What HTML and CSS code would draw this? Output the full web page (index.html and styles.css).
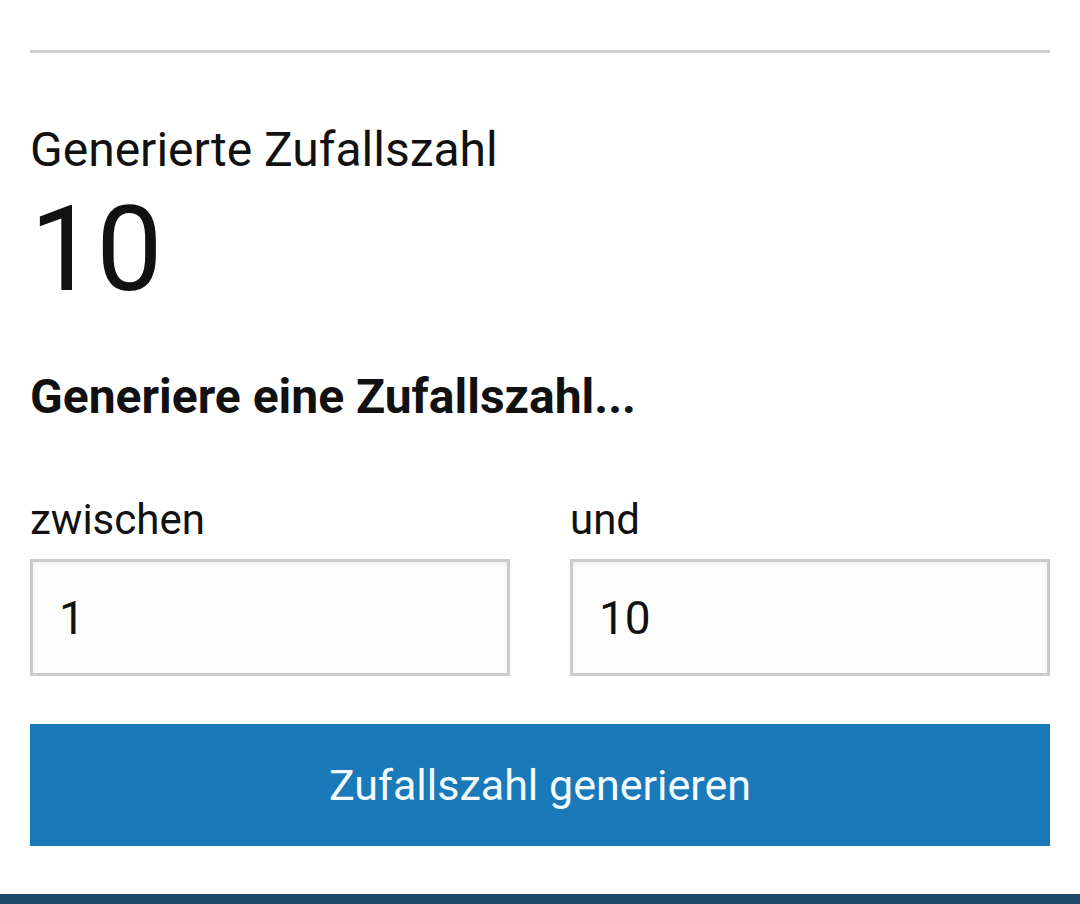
FILE: index.html
```html
<!DOCTYPE html>
<html lang="de">

<head>
  <meta charset="UTF-8" />
  <meta name="viewport" content="width=device-width, initial-scale=1.0" />
  <title>Zufallszahl</title>
  <link rel="stylesheet" href="styles.css">
</head>

<body>
  <div class="page">
    <div class="divider"></div>

    <div class="result">
      <p class="result-label">Generierte Zufallszahl</p>
      <p class="result-value" id="result">10</p>
    </div>

    <h2 class="form-title">Generiere eine Zufallszahl...</h2>

    <div class="range-fields">
      <div class="field">
        <label for="minValue">zwischen</label>
        <input type="text" id="minValue" value="1" />
      </div>
      <div class="field">
        <label for="maxValue">und</label>
        <input type="text" id="maxValue" value="10" />
      </div>
    </div>

    <button class="generate-button" onclick="generate()">Zufallszahl generieren</button>
  </div>

  <div class="footer-bar"></div>

  <script>
    function generate() {
      var min = parseInt(document.getElementById("minValue").value);
      var max = parseInt(document.getElementById("maxValue").value);

      if (isNaN(min) || isNaN(max) || max < min) {
        return;
      }

      var value = Math.floor(Math.random() * (max - min + 1)) + min;
      document.getElementById("result").innerText = value;
    }
  </script>
</body>

</html>
```

FILE: styles.css
```css
body {
  margin: 0;
  font-family: Roboto, "Noto Sans", Arial, sans-serif;
  background-color: #ffffff;
  color: #111111;
}

.page {
  padding: 50px 30px 48px;
}

.divider {
  height: 3px;
  background-color: #d0d0d0;
}

.result {
  margin-top: 69px;
}

.result-label {
  margin: 0;
  font-size: 48px;
  line-height: 56px;
}

.result-value {
  margin: 11px 0 0;
  font-size: 118px;
  line-height: 123px;
}

.form-title {
  margin: 57px 0 0;
  font-size: 48px;
  font-weight: bold;
  line-height: 56px;
}

.range-fields {
  display: grid;
  grid-template-columns: 1fr 1fr;
  gap: 60px;
  margin-top: 70px;
}

.field label {
  display: block;
  font-size: 42px;
  line-height: 50px;
  margin-bottom: 14px;
}

.field input {
  display: block;
  width: 100%;
  height: 117px;
  box-sizing: border-box;
  padding: 0 26px;
  border: 3px solid #cccccc;
  background-color: #fdfdfd;
  box-shadow: inset 0 2px 4px rgba(0, 0, 0, 0.06);
  font-family: inherit;
  font-size: 46px;
  color: #111111;
  outline: none;
}

.generate-button {
  display: block;
  width: 100%;
  height: 122px;
  margin-top: 48px;
  border: none;
  background-color: #1a79b9;
  color: #f2fbff;
  font-family: inherit;
  font-size: 43px;
  cursor: pointer;
}

.generate-button:hover {
  background-color: #166aa3;
}

.footer-bar {
  height: 40px;
  background-color: #1f4a67;
}
```
